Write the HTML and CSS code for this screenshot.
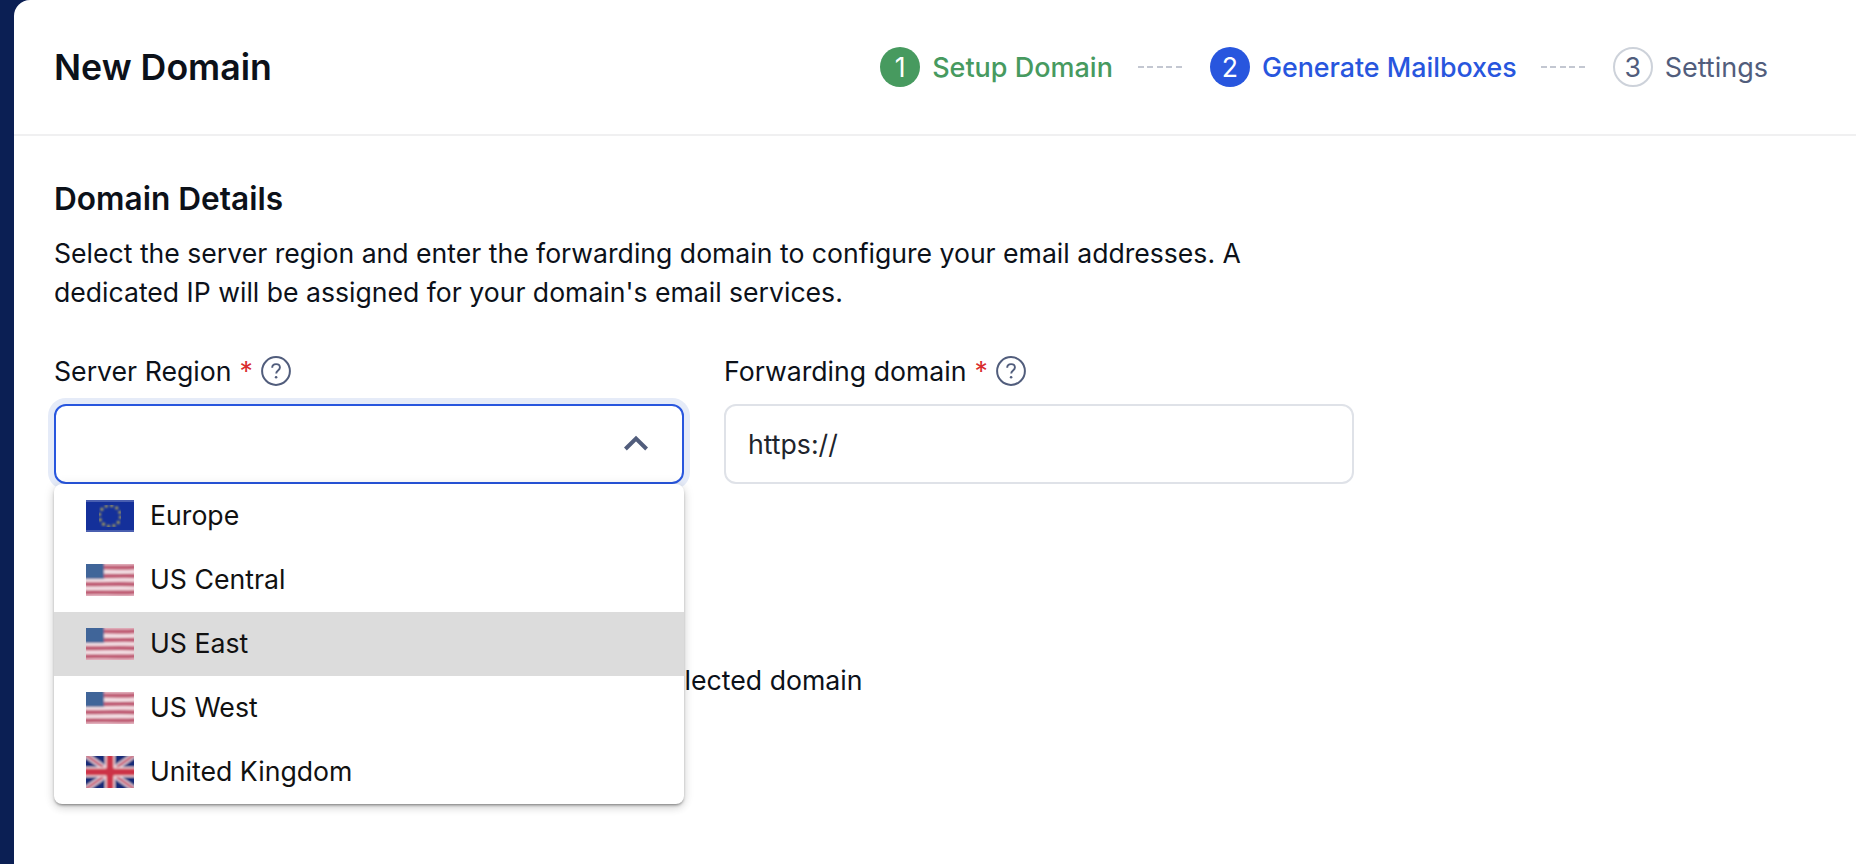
FILE: index.html
```html
<!DOCTYPE html>
<html lang="en">
<head>
<meta charset="utf-8">
<title>New Domain</title>
<link rel="stylesheet" href="styles.css">
</head>
<body>
<svg class="defs" width="0" height="0" aria-hidden="true">
  <defs>
    <filter id="soft" x="0" y="0" width="100%" height="100%"><feGaussianBlur stdDeviation="0.9"/></filter>
    <clipPath id="flagclip"><rect width="48" height="32"/></clipPath>
    <symbol id="flag-us" viewBox="0 0 48 32">
      <g clip-path="url(#flagclip)"><g filter="url(#soft)">
        <rect x="-3" y="-3" width="54" height="38" fill="#e4b4c0"/>
        <path d="M-3 3.5C10 2.5 30 4.5 51 3M-3 12C14 13 30 11 51 12M-3 20C12 21 32 19 51 20.5M-3 28.5C14 27.5 30 29.5 51 28" stroke="#bb4f6b" stroke-width="3.4" fill="none"/>
        <path d="M-3 8C14 7 30 9 51 7.5M-3 16C14 17 30 15 51 16M-3 24.5C14 25 30 23.5 51 24.5" stroke="#f8edf0" stroke-width="2.2" fill="none"/>
        <rect x="-3" y="-3" width="21" height="18" fill="#3f6599"/>
      </g></g>
    </symbol>
    <symbol id="flag-eu" viewBox="0 0 48 32">
      <g clip-path="url(#flagclip)">
        <rect width="48" height="32" fill="#14309a"/>
        <rect width="48" height="2" fill="#4a5fb0"/>
        <rect y="30" width="48" height="2" fill="#4a5fb0"/>
        <circle cx="24" cy="16" r="10.5" fill="none" stroke="#b5a855" stroke-width="2.8" stroke-dasharray="2.8 2.7" filter="url(#soft)"/>
      </g>
    </symbol>
    <symbol id="flag-uk" viewBox="0 0 48 32">
      <g clip-path="url(#flagclip)"><g filter="url(#soft)">
        <rect x="-3" y="-3" width="54" height="38" fill="#142a78"/>
        <path d="M-3 -3L51 35M51 -3L-3 35" stroke="#f1e4e8" stroke-width="5.5" fill="none"/>
        <path d="M-3 -3L51 35M51 -3L-3 35" stroke="#c04060" stroke-width="2.5" fill="none"/>
        <path d="M24 -3V35M-3 16H51" stroke="#f1e4e8" stroke-width="10" fill="none"/>
        <path d="M24 -3V35M-3 16H51" stroke="#cc3347" stroke-width="7" fill="none"/>
      </g></g>
    </symbol>
    <symbol id="help" viewBox="0 0 30 30">
      <circle cx="15" cy="15" r="13.9" fill="none" stroke="#515d7c" stroke-width="2"/>
      <path d="M11.2 11.7c0-2.2 1.7-3.6 3.9-3.6s3.8 1.3 3.8 3.3c0 3-3.7 3.1-3.7 6.1" fill="none" stroke="#515d7c" stroke-width="1.9"/>
      <circle cx="15.1" cy="21.3" r="1.3" fill="#515d7c"/>
    </symbol>
  </defs>
</svg>

<aside class="rail"></aside>

<main class="panel">
  <header class="topbar">
    <h1 class="title">New Domain</h1>
    <ol class="stepper">
      <li class="step step-done"><span class="step-num">1</span><span class="step-label">Setup Domain</span></li>
      <li class="step-line"></li>
      <li class="step step-active"><span class="step-num">2</span><span class="step-label">Generate Mailboxes</span></li>
      <li class="step-line"></li>
      <li class="step step-todo"><span class="step-num">3</span><span class="step-label">Settings</span></li>
    </ol>
  </header>

  <section class="content">
    <h2 class="section-title">Domain Details</h2>
    <p class="section-text">Select the server region and enter the forwarding domain to configure your email addresses. A dedicated IP will be assigned for your domain's email services.</p>

    <div class="fields">
      <div class="field">
        <label class="field-label">Server Region <span class="req">*</span> <svg class="help-icon"><use href="#help"/></svg></label>
        <div class="select-wrap">
          <div class="select">
            <svg class="chevron" viewBox="0 0 24 16"><path d="M1.4 14L12 3.5L22.6 14" fill="none" stroke="#515d7c" stroke-width="4"/></svg>
          </div>
          <ul class="menu">
            <li class="menu-item"><svg class="flag"><use href="#flag-eu"/></svg>Europe</li>
            <li class="menu-item"><svg class="flag"><use href="#flag-us"/></svg>US Central</li>
            <li class="menu-item menu-item-hover"><svg class="flag"><use href="#flag-us"/></svg>US East</li>
            <li class="menu-item"><svg class="flag"><use href="#flag-us"/></svg>US West</li>
            <li class="menu-item"><svg class="flag"><use href="#flag-uk"/></svg>United Kingdom</li>
          </ul>
        </div>
      </div>
      <div class="field">
        <label class="field-label">Forwarding domain <span class="req">*</span> <svg class="help-icon"><use href="#help"/></svg></label>
        <div class="input">https://</div>
      </div>
    </div>

    <p class="note">selected domain</p>
  </section>
</main>
</body>
</html>
```
FILE: styles.css
```css
* { box-sizing: border-box; }
html, body { height: 100%; }
body {
  margin: 0;
  display: flex;
  height: 864px;
  overflow: hidden;
  background: #0b1f54;
  font-family: Inter, "Liberation Sans", sans-serif;
  color: #0c1119;
}
.defs { position: absolute; }
.rail { width: 14px; flex: none; }
.panel {
  flex: 1;
  background: #fff;
  border-top-left-radius: 16px;
}
.topbar {
  height: 136px;
  border-bottom: 2px solid #f0f0f1;
  display: flex;
  align-items: center;
  justify-content: space-between;
  padding: 0 88px 0 40px;
}
.title { margin: 0; font-size: 35.7px; font-weight: 600; }
.stepper { list-style: none; margin: 0; padding: 0; display: flex; align-items: center; gap: 25px; }
.step { display: flex; align-items: center; gap: 12px; font-size: 26.8px; font-weight: 500; }
.step-num {
  width: 40px; height: 40px; border-radius: 50%;
  display: flex; align-items: center; justify-content: center;
  font-size: 26.67px;
  font-weight: 400;
}
.step-done { color: #479a5f; font-size: 27px; }
.step-done .step-num { background: #479a5f; color: #fff; }
.step-active { color: #2856de; margin-right: -1px; }
.step-active .step-num { background: #2856de; color: #fff; }
.step-todo { color: #515d7c; font-size: 27px; font-weight: 400; }
.step-todo .step-num { border: 2px solid #cdd2da; }
.step-line {
  width: 47px; height: 2px;
  background: repeating-linear-gradient(90deg, #c3c7d1 0 6px, transparent 6px 9.4px);
}
.content { padding: 46px 0 0 40px; }
.section-title { margin: 0; font-size: 31.6px; font-weight: 600; line-height: 34px; }
.section-text { margin: 18px 0 0; width: 1240px; font-size: 26.6px; line-height: 39px; }
.fields { display: flex; gap: 40px; margin-top: 39px; }
.field { width: 630px; }
.field-label { display: flex; align-items: center; gap: 8px; height: 40px; font-size: 26.67px; }
.req { color: #d92d2d; }
.help-icon { width: 30px; height: 30px; }
.select-wrap { position: relative; margin-top: 13px; }
.select {
  height: 80px;
  border: 2px solid #2856de;
  border-radius: 12px;
  box-shadow: 0 0 0 6px #e5ebf8;
  display: flex; align-items: center; justify-content: flex-end;
  padding-right: 34px;
  background: #fff;
}
.chevron { width: 24px; height: 16px; margin-bottom: 2px; }
.menu {
  position: absolute; top: 80px; left: 0; right: 0;
  list-style: none; margin: 0; padding: 0;
  background: #fff;
  border-radius: 8px;
  overflow: hidden;
  box-shadow: 0 2px 3px -1px rgba(0,0,0,.45), 0 4px 8px rgba(0,0,0,.12), 0 1px 12px rgba(0,0,0,.1);
  z-index: 2;
}
.menu-item { height: 64px; display: flex; align-items: center; gap: 16px; padding: 0 0 2px 32px; font-size: 26.67px; color: #111; }
.menu-item-hover { background: #dcdcdc; }
.flag { width: 48px; height: 32px; flex: none; margin-top: 2px; }
.input {
  margin-top: 13px;
  height: 80px;
  border: 2px solid #dfe2e8;
  border-radius: 12px;
  display: flex; align-items: center;
  padding-left: 22px;
  font-size: 26.67px;
  color: #20242c;
}
.note { margin: 0; padding: 177px 0 0 601px; font-size: 26.67px; line-height: 39px; }
```
